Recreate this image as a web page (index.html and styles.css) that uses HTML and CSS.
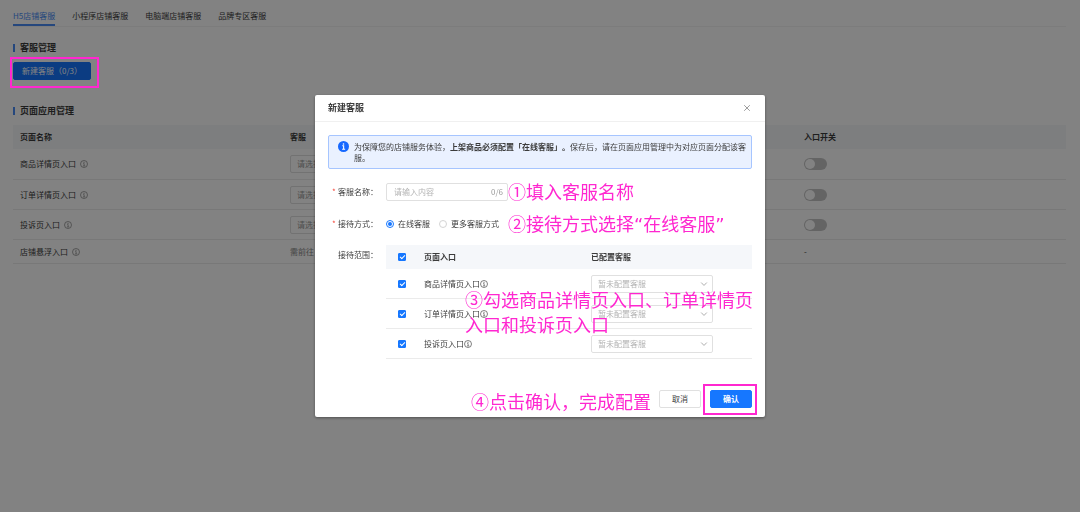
FILE: index.html
```html
<!DOCTYPE html>
<html lang="zh-CN">
<head>
  <meta charset="UTF-8" />
  <title>店铺客服</title>
  <meta name="viewport" content="width=device-width, initial-scale=1.0" />
  <link rel="stylesheet" href="styles.css">
</head>
<body>
  <svg class="defs" aria-hidden="true">
    <symbol id="info" viewBox="0 0 16 16">
      <circle cx="8" cy="8" r="7" fill="none" stroke="currentColor" stroke-width="1.3"/>
      <path d="M6.3 7.2h2v4.4M6 11.8h4.4" fill="none" stroke="currentColor" stroke-width="1.2"/>
      <circle cx="8" cy="4.6" r="1" fill="currentColor"/>
    </symbol>
    <symbol id="arrow" viewBox="0 0 10 10">
      <path d="M1.5 3.2 5 6.8 8.5 3.2" fill="none" stroke="currentColor" stroke-width="1.2"/>
    </symbol>
  </svg>

  <main class="page">
    <nav class="tabs">
      <a class="active" href="#h5">H5店铺客服</a>
      <a href="#mini">小程序店铺客服</a>
      <a href="#pc">电脑端店铺客服</a>
      <a href="#brand">品牌专区客服</a>
    </nav>

    <h2>客服管理</h2>
    <div class="create marked">
      <button class="btn primary" type="button">新建客服（0/3）</button>
      <span class="mark mark-create"></span>
    </div>

    <h2>页面应用管理</h2>
    <table class="apply">
      <thead>
        <tr><th class="col-name">页面名称</th><th class="col-service">客服</th><th>入口开关</th></tr>
      </thead>
      <tbody>
        <tr>
          <td>商品详情页入口<svg class="tip"><use href="#info"/></svg></td>
          <td><span class="select"><select aria-label="商品详情页客服"><option>请选择客服</option></select><svg><use href="#arrow"/></svg></span></td>
          <td><input class="switch" type="checkbox" role="switch" aria-label="商品详情页入口开关"></td>
        </tr>
        <tr>
          <td>订单详情页入口<svg class="tip"><use href="#info"/></svg></td>
          <td><span class="select"><select aria-label="订单详情页客服"><option>请选择客服</option></select><svg><use href="#arrow"/></svg></span></td>
          <td><input class="switch" type="checkbox" role="switch" aria-label="订单详情页入口开关"></td>
        </tr>
        <tr>
          <td>投诉页入口<svg class="tip"><use href="#info"/></svg></td>
          <td><span class="select"><select aria-label="投诉页客服"><option>请选择客服</option></select><svg><use href="#arrow"/></svg></span></td>
          <td><input class="switch" type="checkbox" role="switch" aria-label="投诉页入口开关"></td>
        </tr>
        <tr class="short">
          <td>店铺悬浮入口<svg class="tip"><use href="#info"/></svg></td>
          <td class="muted">需前往</td>
          <td>-</td>
        </tr>
      </tbody>
    </table>
  </main>

  <div class="overlay">
    <form class="modal" role="dialog" aria-labelledby="modal-title">
      <header>
        <h3 id="modal-title">新建客服</h3>
        <button class="close" type="button" aria-label="关闭">
          <svg viewBox="0 0 10 10"><path d="M1.5 1.5l7 7M8.5 1.5l-7 7" stroke="currentColor" stroke-width="1.2"/></svg>
        </button>
      </header>

      <div class="content">
        <div class="alert">
          <svg viewBox="0 0 16 16"><circle cx="8" cy="8" r="8" fill="#1668ff"/><circle cx="8" cy="4.3" r="1.2" fill="#fff"/><path d="M6.2 7h2v4.8M6 12h4.4" fill="none" stroke="#fff" stroke-width="1.6"/></svg>
          <p>为保障您的店铺服务体验，<b>上架商品必须配置「在线客服」。</b>保存后，请在页面应用管理中为对应页面分配该客服。</p>
        </div>

        <div class="field">
          <label class="name required" for="service-name">客服名称：</label>
          <div class="textbox">
            <input id="service-name" type="text" maxlength="6" placeholder="请输入内容">
            <span>0/6</span>
          </div>
        </div>

        <div class="field" role="radiogroup" aria-labelledby="mode">
          <span class="name required" id="mode">接待方式：</span>
          <label class="radio"><input type="radio" name="mode" checked>在线客服</label>
          <label class="radio"><input type="radio" name="mode">更多客服方式</label>
        </div>

        <div class="field top">
          <span class="name">接待范围：</span>
          <table class="scope">
            <thead>
              <tr><th class="col-check"><input type="checkbox" aria-label="全选" checked></th><th class="col-entry">页面入口</th><th>已配置客服</th></tr>
            </thead>
            <tbody>
              <tr>
                <td><input id="goods" type="checkbox" checked></td>
                <td><label for="goods">商品详情页入口<svg class="tip"><use href="#info"/></svg></label></td>
                <td><span class="select"><select aria-label="商品详情页已配置客服"><option>暂未配置客服</option></select><svg><use href="#arrow"/></svg></span></td>
              </tr>
              <tr>
                <td><input id="order" type="checkbox" checked></td>
                <td><label for="order">订单详情页入口<svg class="tip"><use href="#info"/></svg></label></td>
                <td><span class="select"><select aria-label="订单详情页已配置客服"><option>暂未配置客服</option></select><svg><use href="#arrow"/></svg></span></td>
              </tr>
              <tr>
                <td><input id="complaint" type="checkbox" checked></td>
                <td><label for="complaint">投诉页入口<svg class="tip"><use href="#info"/></svg></label></td>
                <td><span class="select"><select aria-label="投诉页已配置客服"><option>暂未配置客服</option></select><svg><use href="#arrow"/></svg></span></td>
              </tr>
            </tbody>
          </table>
        </div>
      </div>

      <footer>
        <button class="btn" type="button">取消</button>
        <div class="marked">
          <button class="btn primary strong" type="button">确认</button>
          <span class="mark mark-confirm"></span>
        </div>
      </footer>

      <!-- step notes over the dialog -->
      <p class="note note-name">①填入客服名称</p>
      <p class="note note-mode">②接待方式选择<span class="quote">“</span>在线客服<span class="quote">”</span></p>
      <p class="note note-scope">③勾选商品详情页入口、订单详情页<br>入口和投诉页入口</p>
      <p class="note note-confirm">④点击确认，完成配置</p>
    </form>
  </div>
</body>
</html>
```

FILE: styles.css
```css
:root {
  --blue: #1677ff;
  --pink: #ff27d0;
  --text: #3c3c3c;
  --muted: #b4b4b4;
  --line: #ebebeb;
  --border: #e0e0e0;
}

* {
  box-sizing: border-box;
}

body {
  margin: 0;
  background: #fff;
  color: var(--text);
  font: 8px/12px "Noto Sans CJK SC", sans-serif;
}

h2, h3, p {
  margin: 0;
}

button, input, select {
  margin: 0;
  font: inherit;
  color: inherit;
}

svg {
  display: block;
  flex: none;
}

.defs {
  position: absolute;
  width: 0;
  height: 0;
}

/* page */
.page {
  padding: 0 14px 0 13px;
}

.tabs {
  display: flex;
  gap: 17px;
  height: 27px;
  padding-top: 10px;
  border-bottom: 1px solid #f3f3f3;
}

.tabs a {
  height: 16px;
  color: var(--text);
  text-decoration: none;
}

.tabs .active {
  color: #4a8cf5;
  border-bottom: 2px solid #4a8cf5;
}

h2 {
  display: flex;
  align-items: center;
  gap: 5px;
  margin-top: 15px;
  font-size: 9px;
  line-height: 12px;
  font-weight: 700;
}

h2::before {
  content: "";
  width: 2px;
  height: 8px;
  background: #4a8cf5;
}

.create {
  width: max-content;
  margin: 8px 0 25px;
}

.btn {
  display: block;
  min-width: 42px;
  height: 18px;
  padding: 0 8px;
  border: 1px solid var(--border);
  border-radius: 2px;
  background: #fff;
  line-height: 12px;
  cursor: pointer;
}

.btn.primary {
  border-color: var(--blue);
  background: var(--blue);
  color: #fff;
}

.btn.strong {
  font-weight: 700;
}

table {
  width: 100%;
  border-collapse: separate;
  border-spacing: 0;
  table-layout: fixed;
}

th, td {
  padding: 0 7px;
  text-align: left;
  vertical-align: middle;
}

th {
  height: 24px;
  background: #f5f7fa;
  font-weight: 700;
}

td {
  height: 30px;
  border-bottom: 1px solid var(--line);
}

.apply {
  margin-top: 8px;
}

.apply tbody tr:first-child td {
  height: 31px;
}

.apply .short td {
  height: 24px;
}

.apply .muted {
  color: #888;
}

.col-name {
  width: 270px;
}

.col-service {
  width: 514px;
}

.tip {
  display: inline-block;
  width: 8px;
  height: 8px;
  vertical-align: -1px;
}

.apply .tip {
  margin-left: 4px;
  color: #777;
}

.select {
  position: relative;
  display: block;
  width: 122px;
}

.select select {
  display: block;
  width: 100%;
  height: 18px;
  padding: 0 20px 0 6px;
  appearance: none;
  border: 1px solid var(--border);
  border-radius: 2px;
  background: none;
  color: var(--muted);
}

.apply .select select {
  color: #999;
}

.select svg {
  position: absolute;
  top: 5px;
  right: 5px;
  width: 8px;
  height: 8px;
  color: #aaa;
  pointer-events: none;
}

.switch {
  display: block;
  width: 23px;
  height: 12px;
  padding: 1px;
  appearance: none;
  border-radius: 6px;
  background: #c4c4c4;
}

.switch::before {
  content: "";
  display: block;
  width: 10px;
  height: 10px;
  border-radius: 50%;
  background: #fff;
}

/* dialog */
.overlay {
  position: fixed;
  inset: 0;
  display: flex;
  align-items: center;
  justify-content: center;
  background: rgba(0, 0, 0, 0.49);
}

.modal {
  position: relative;
  width: 450px;
  max-width: 100%;
  border-radius: 2px;
  background: #fff;
  box-shadow: 0 1px 3px rgba(0, 0, 0, 0.4);
}

.modal header {
  display: flex;
  align-items: center;
  justify-content: space-between;
  height: 27px;
  padding: 0 14px 0 13px;
  border-bottom: 1px solid #f0f0f0;
}

h3 {
  font-size: 9px;
  line-height: 12px;
  font-weight: 700;
}

.close {
  width: 8px;
  height: 8px;
  padding: 0;
  border: 0;
  background: none;
  color: #999;
}

.content {
  padding: 13px 13px 0;
}

.alert {
  display: flex;
  gap: 5px;
  padding: 5px 4px 5px 9px;
  border: 1px solid #a6c5ff;
  border-radius: 2px;
  background: #eaf1ff;
  line-height: 11px;
}

.alert svg {
  width: 11px;
  height: 11px;
}

.alert b {
  font-weight: 700;
}

.field {
  display: flex;
  align-items: center;
  margin-top: 14px;
}

.field.top {
  align-items: flex-start;
  margin-top: 12px;
}

.name {
  position: relative;
  flex: none;
  width: 58px;
  padding-left: 10px;
}

.name.required::before {
  content: "*";
  position: absolute;
  left: 4px;
  color: #f5483b;
}

.field.top .name {
  padding-top: 4px;
}

.textbox {
  display: flex;
  align-items: center;
  width: 122px;
  height: 18px;
  padding: 0 4px 0 7px;
  border: 1px solid var(--border);
  border-radius: 2px;
  color: #999;
}

.textbox input {
  flex: 1;
  min-width: 0;
  padding: 0;
  border: 0;
  outline: 0;
  background: none;
  color: var(--text);
}

.textbox input::placeholder {
  color: var(--muted);
}

.radio {
  display: flex;
  align-items: center;
  gap: 4px;
  height: 18px;
  margin-right: 9px;
}

.radio input {
  width: 8px;
  height: 8px;
  padding: 1px;
  appearance: none;
  border: 1px solid #d4d4d4;
  border-radius: 50%;
}

.radio input:checked {
  border-color: var(--blue);
  background: var(--blue) content-box;
}

.scope th, .scope td {
  padding: 0;
}

.scope .col-check {
  width: 38px;
}

.scope .col-entry {
  width: 167px;
}

.scope input {
  position: relative;
  display: block;
  width: 8px;
  height: 8px;
  margin-left: 12px;
  appearance: none;
  border: 1px solid var(--blue);
  border-radius: 1px;
}

.scope input:checked {
  background: var(--blue);
}

.scope input:checked::before {
  content: "";
  position: absolute;
  top: 0;
  left: 2px;
  width: 2px;
  height: 4px;
  border: solid #fff;
  border-width: 0 1px 1px 0;
  transform: rotate(45deg);
}

.modal footer {
  display: flex;
  justify-content: flex-end;
  gap: 9px;
  padding: 31px 13px 9px;
}

/* highlights and notes */
.marked {
  position: relative;
}

.mark {
  position: absolute;
  border: 2px solid var(--pink);
  pointer-events: none;
}

.mark-create {
  z-index: 1;
  inset: -5px -8px -8px -3px;
}

.mark-confirm {
  inset: -6px -5px -7px -7px;
}

.note {
  position: absolute;
  color: var(--pink);
  font: 18px/25px "Noto Sans CJK SC", sans-serif;
  white-space: nowrap;
  pointer-events: none;
}

.quote {
  font-family: "DejaVu Sans", sans-serif;
  line-height: 1;
}

.note-name {
  top: 84px;
  left: 193px;
}

.note-mode {
  top: 116px;
  left: 193px;
}

.note-scope {
  top: 192px;
  left: 150px;
}

.note-confirm {
  top: 294px;
  left: 156px;
}
```
